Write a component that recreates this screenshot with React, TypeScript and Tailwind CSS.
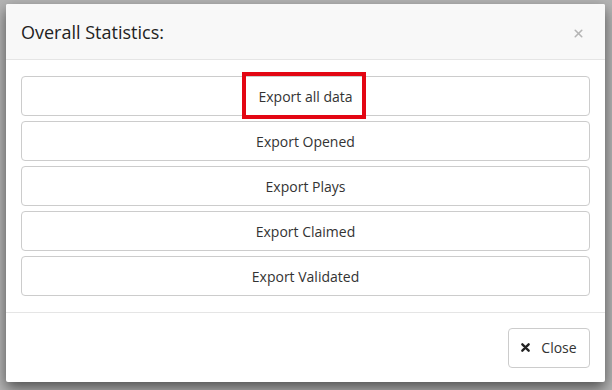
import { X } from "lucide-react";

const EXPORTS = [
  { label: "Export all data", highlight: true },
  { label: "Export Opened" },
  { label: "Export Plays" },
  { label: "Export Claimed" },
  { label: "Export Validated" },
];

export default function App() {
  return (
    <div
      className="h-[390px] w-[612px] overflow-hidden bg-[#b4b4b4] pt-[4px] pl-[6px]"
      style={{ fontFamily: "'Open Sans', 'Liberation Sans', sans-serif" }}
    >
      <div className="w-[599px] bg-white rounded-[2px] shadow-[0_6px_14px_rgba(0,0,0,0.55)]">
        {/* Header */}
        <div className="h-[56px] flex items-center justify-between px-[15px] bg-[#f8f8f8] border-b border-[#e5e5e5] rounded-t-[2px]">
          <h4 className="text-[18px] text-[#222] leading-none mt-[1px]">Overall Statistics:</h4>
          <X className="w-[13px] h-[13px] text-[#b5b5b5] mr-[5px] mt-[3px]" strokeWidth={3} />
        </div>

        {/* Body */}
        <div className="px-[15px] pt-[16px] pb-[16px] flex flex-col gap-[5px]">
          {EXPORTS.map((e) => (
            <button
              key={e.label}
              className="h-[40px] w-full border border-[#cccccc] rounded-[4px] bg-white text-[14px] text-[#333] flex items-center justify-center"
            >
              <span className="relative">
                {e.label}
                {e.highlight && (
                  <span className="absolute left-[-16px] right-[-13px] top-[-14px] bottom-[-12px] border-[4px] border-[#e30613]" />
                )}
              </span>
            </button>
          ))}
        </div>

        {/* Footer */}
        <div className="border-t border-[#e5e5e5] h-[70px] px-[15px] flex items-center justify-end">
          <button className="h-[40px] w-[82px] border border-[#cccccc] rounded-[4px] bg-white text-[14px] text-[#333] flex items-center justify-center gap-[11px]">
            <svg viewBox="0 0 10 10" className="w-[9px] h-[9px]">
              <path d="M1.5 1.5 L8.5 8.5 M8.5 1.5 L1.5 8.5" stroke="#222" strokeWidth="2.6" strokeLinecap="round" />
            </svg>
            <span>Close</span>
          </button>
        </div>
      </div>
    </div>
  );
}
